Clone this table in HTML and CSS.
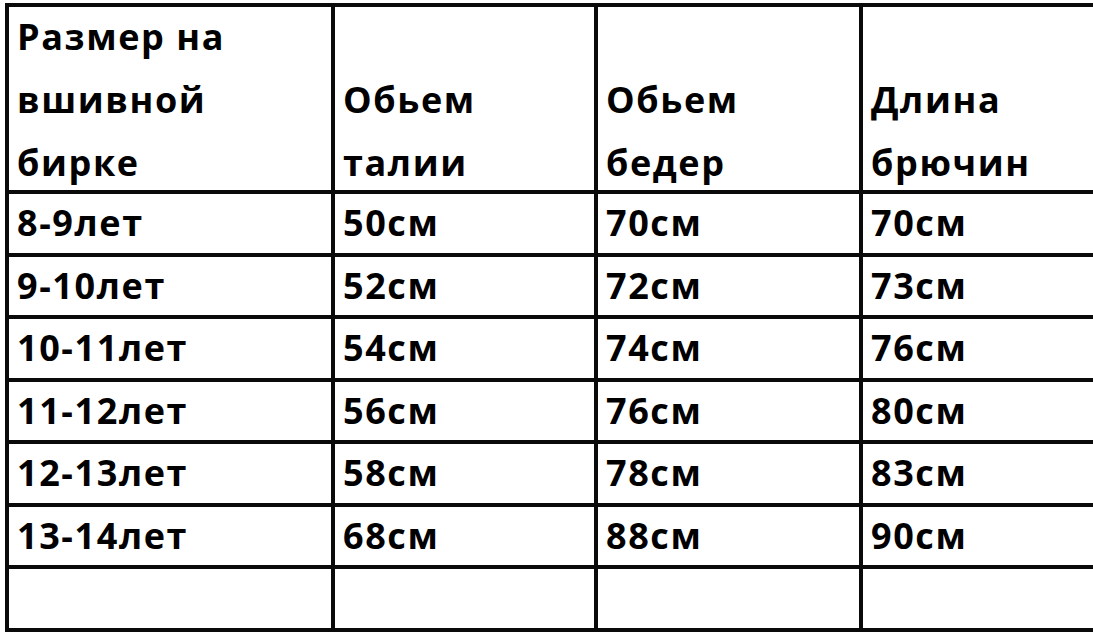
FILE: index.html
```html
<!DOCTYPE html>
<html lang="ru">
<head>
<meta charset="utf-8">
<title>Размерная таблица</title>
<link rel="stylesheet" href="styles.css">
</head>
<body>
<div class="sheet">
  <div class="cell head"><span class="lines">Размер на<br>вшивной<br>бирке</span></div>
  <div class="cell head"><span class="lines">Обьем<br>талии</span></div>
  <div class="cell head"><span class="lines">Обьем<br>бедер</span></div>
  <div class="cell head"><span class="lines">Длина<br>брючин</span></div>

  <div class="cell">8-9лет</div>
  <div class="cell">50см</div>
  <div class="cell">70см</div>
  <div class="cell">70см</div>

  <div class="cell">9-10лет</div>
  <div class="cell">52см</div>
  <div class="cell">72см</div>
  <div class="cell">73см</div>

  <div class="cell">10-11лет</div>
  <div class="cell">54см</div>
  <div class="cell">74см</div>
  <div class="cell">76см</div>

  <div class="cell">11-12лет</div>
  <div class="cell">56см</div>
  <div class="cell">76см</div>
  <div class="cell">80см</div>

  <div class="cell">12-13лет</div>
  <div class="cell">58см</div>
  <div class="cell">78см</div>
  <div class="cell">83см</div>

  <div class="cell">13-14лет</div>
  <div class="cell">68см</div>
  <div class="cell">88см</div>
  <div class="cell">90см</div>

  <div class="cell"></div>
  <div class="cell"></div>
  <div class="cell"></div>
  <div class="cell"></div>
</div>
</body>
</html>
```
FILE: styles.css
```css
html, body {
  margin: 0;
  padding: 0;
  background: #fff;
  overflow: hidden;
}
body {
  width: 1093px;
  height: 633px;
}
.sheet {
  margin: 3px 0 0 5px;
  width: 1110px;
  display: grid;
  grid-template-columns: 322px 259px 261px 1fr;
  grid-template-rows: 183px repeat(7, 58.5px);
  gap: 4px;
  padding: 4px;
  background: #0a0a0a;
  font-family: "Open Sans", "Noto Sans", sans-serif;
  font-weight: 700;
  font-size: 36px;
  letter-spacing: 1.6px;
  color: #000;
}
.cell {
  background: #fff;
  padding-left: 8px;
  display: flex;
  align-items: center;
  line-height: 1;
  overflow: hidden;
}
.head {
  align-items: flex-end;
  line-height: 63px;
}
.lines {
  margin-bottom: -4px;
}
```
